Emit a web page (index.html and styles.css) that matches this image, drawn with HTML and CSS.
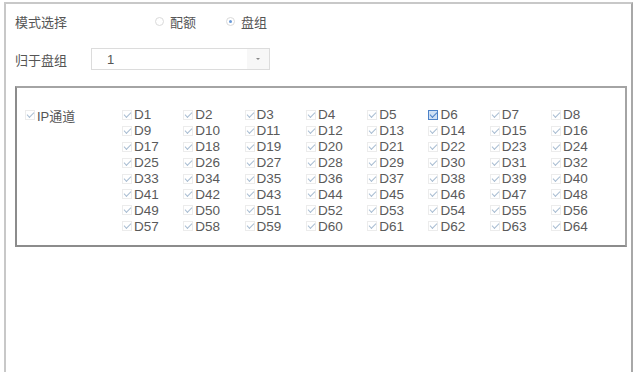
FILE: index.html
```html
<!DOCTYPE html>
<html lang="zh-CN">
<head>
    <meta charset="UTF-8">
    <title>盘组配置</title>
    <link rel="stylesheet" href="styles.css">
</head>
<body>
    <div class="frame">
        <div class="row">
            <span class="label">模式选择</span>
            <div class="radios">
                <label class="radio"><span class="dot"></span>配额</label>
                <label class="radio on"><span class="dot"></span>盘组</label>
            </div>
        </div>
        <div class="row">
            <span class="label">归于盘组</span>
            <div class="select">
                <span class="value">1</span>
                <span class="arrow"></span>
            </div>
        </div>
        <div class="box">
            <div class="head"><span class="chk"></span>IP通道</div>
            <div class="grid" id="grid"></div>
        </div>
    </div>
    <script>
        const grid = document.getElementById('grid');
        let html = '';
        for (let i = 1; i <= 64; i++) {
            const cls = i === 6 ? 'chk focus' : 'chk';
            html += `<div class="item"><span class="${cls}"></span>D${i}</div>`;
        }
        grid.innerHTML = html;
    </script>
</body>
</html>
```

FILE: styles.css
```css
body {
    margin: 0;
    background-color: #fff;
    font-family: "Liberation Sans", "Noto Sans CJK SC", sans-serif;
    color: #555;
    font-size: 13px;
}

.frame {
    margin: 2px 0 0 4px;
    width: 629px;
    height: 380px;
    box-sizing: border-box;
    border: 2px solid #c8c8c8;
    border-right-color: #a8a8a8;
    border-bottom: none;
    padding: 6px 0 0 9px;
}

.row {
    display: flex;
    align-items: center;
    height: 22px;
    margin-bottom: 16px;
}

.label {
    width: 76px;
    font-family: "Noto Sans CJK SC", sans-serif;
    color: #555;
}

.radios {
    display: flex;
    padding-left: 64px;
    gap: 30px;
}

.radio {
    display: flex;
    align-items: center;
    font-family: "Noto Sans CJK SC", sans-serif;
    color: #555;
}

.dot {
    width: 9px;
    height: 9px;
    border: 1px solid #dadada;
    border-radius: 50%;
    margin-right: 6px;
    box-sizing: border-box;
    position: relative;
}

.radio.on .dot::after {
    content: "";
    position: absolute;
    left: 2px;
    top: 2px;
    width: 3px;
    height: 3px;
    border-radius: 50%;
    background-color: #6a9ad8;
}

.select {
    width: 179px;
    height: 22px;
    box-sizing: border-box;
    border: 1px solid #dcdcdc;
    display: flex;
    align-items: center;
}

.select .value {
    flex: 1;
    padding-left: 15px;
}

.select .arrow {
    width: 22px;
    height: 20px;
    background-color: #f7f7f7;
    position: relative;
}

.select .arrow::after {
    content: "";
    position: absolute;
    left: 9px;
    top: 9px;
    border-left: 2px solid transparent;
    border-right: 2px solid transparent;
    border-top: 2px solid #888;
}

.box {
    margin-top: 16px;
    width: 612px;
    height: 161px;
    box-sizing: border-box;
    border: 2px solid #a4a4a4;
    border-left-color: #8c8c8c;
    border-bottom-color: #8c8c8c;
    padding: 19px 0 0 8px;
    display: flex;
}

.head {
    width: 97px;
    height: 16px;
    display: flex;
    align-items: center;
}

.grid {
    display: grid;
    grid-template-columns: repeat(8, 61.3px);
    grid-auto-rows: 15.9px;
}

.item {
    display: flex;
    align-items: center;
    font-size: 13.5px;
    color: #5a5a5a;
}

.chk {
    width: 10px;
    height: 10px;
    box-sizing: border-box;
    border: 1px solid #ececec;
    margin-right: 2px;
    position: relative;
    flex-shrink: 0;
}

.chk::after {
    content: "";
    position: absolute;
    left: 1px;
    top: 1px;
    width: 6px;
    height: 3px;
    border-left: 1px solid #a9bdd2;
    border-bottom: 1px solid #a9bdd2;
    transform: rotate(-45deg);
}

.chk.focus {
    border-color: #4d82c8;
    background-color: #cfe0f4;
}

.chk.focus::after {
    border-color: #4d82c8;
}
```
